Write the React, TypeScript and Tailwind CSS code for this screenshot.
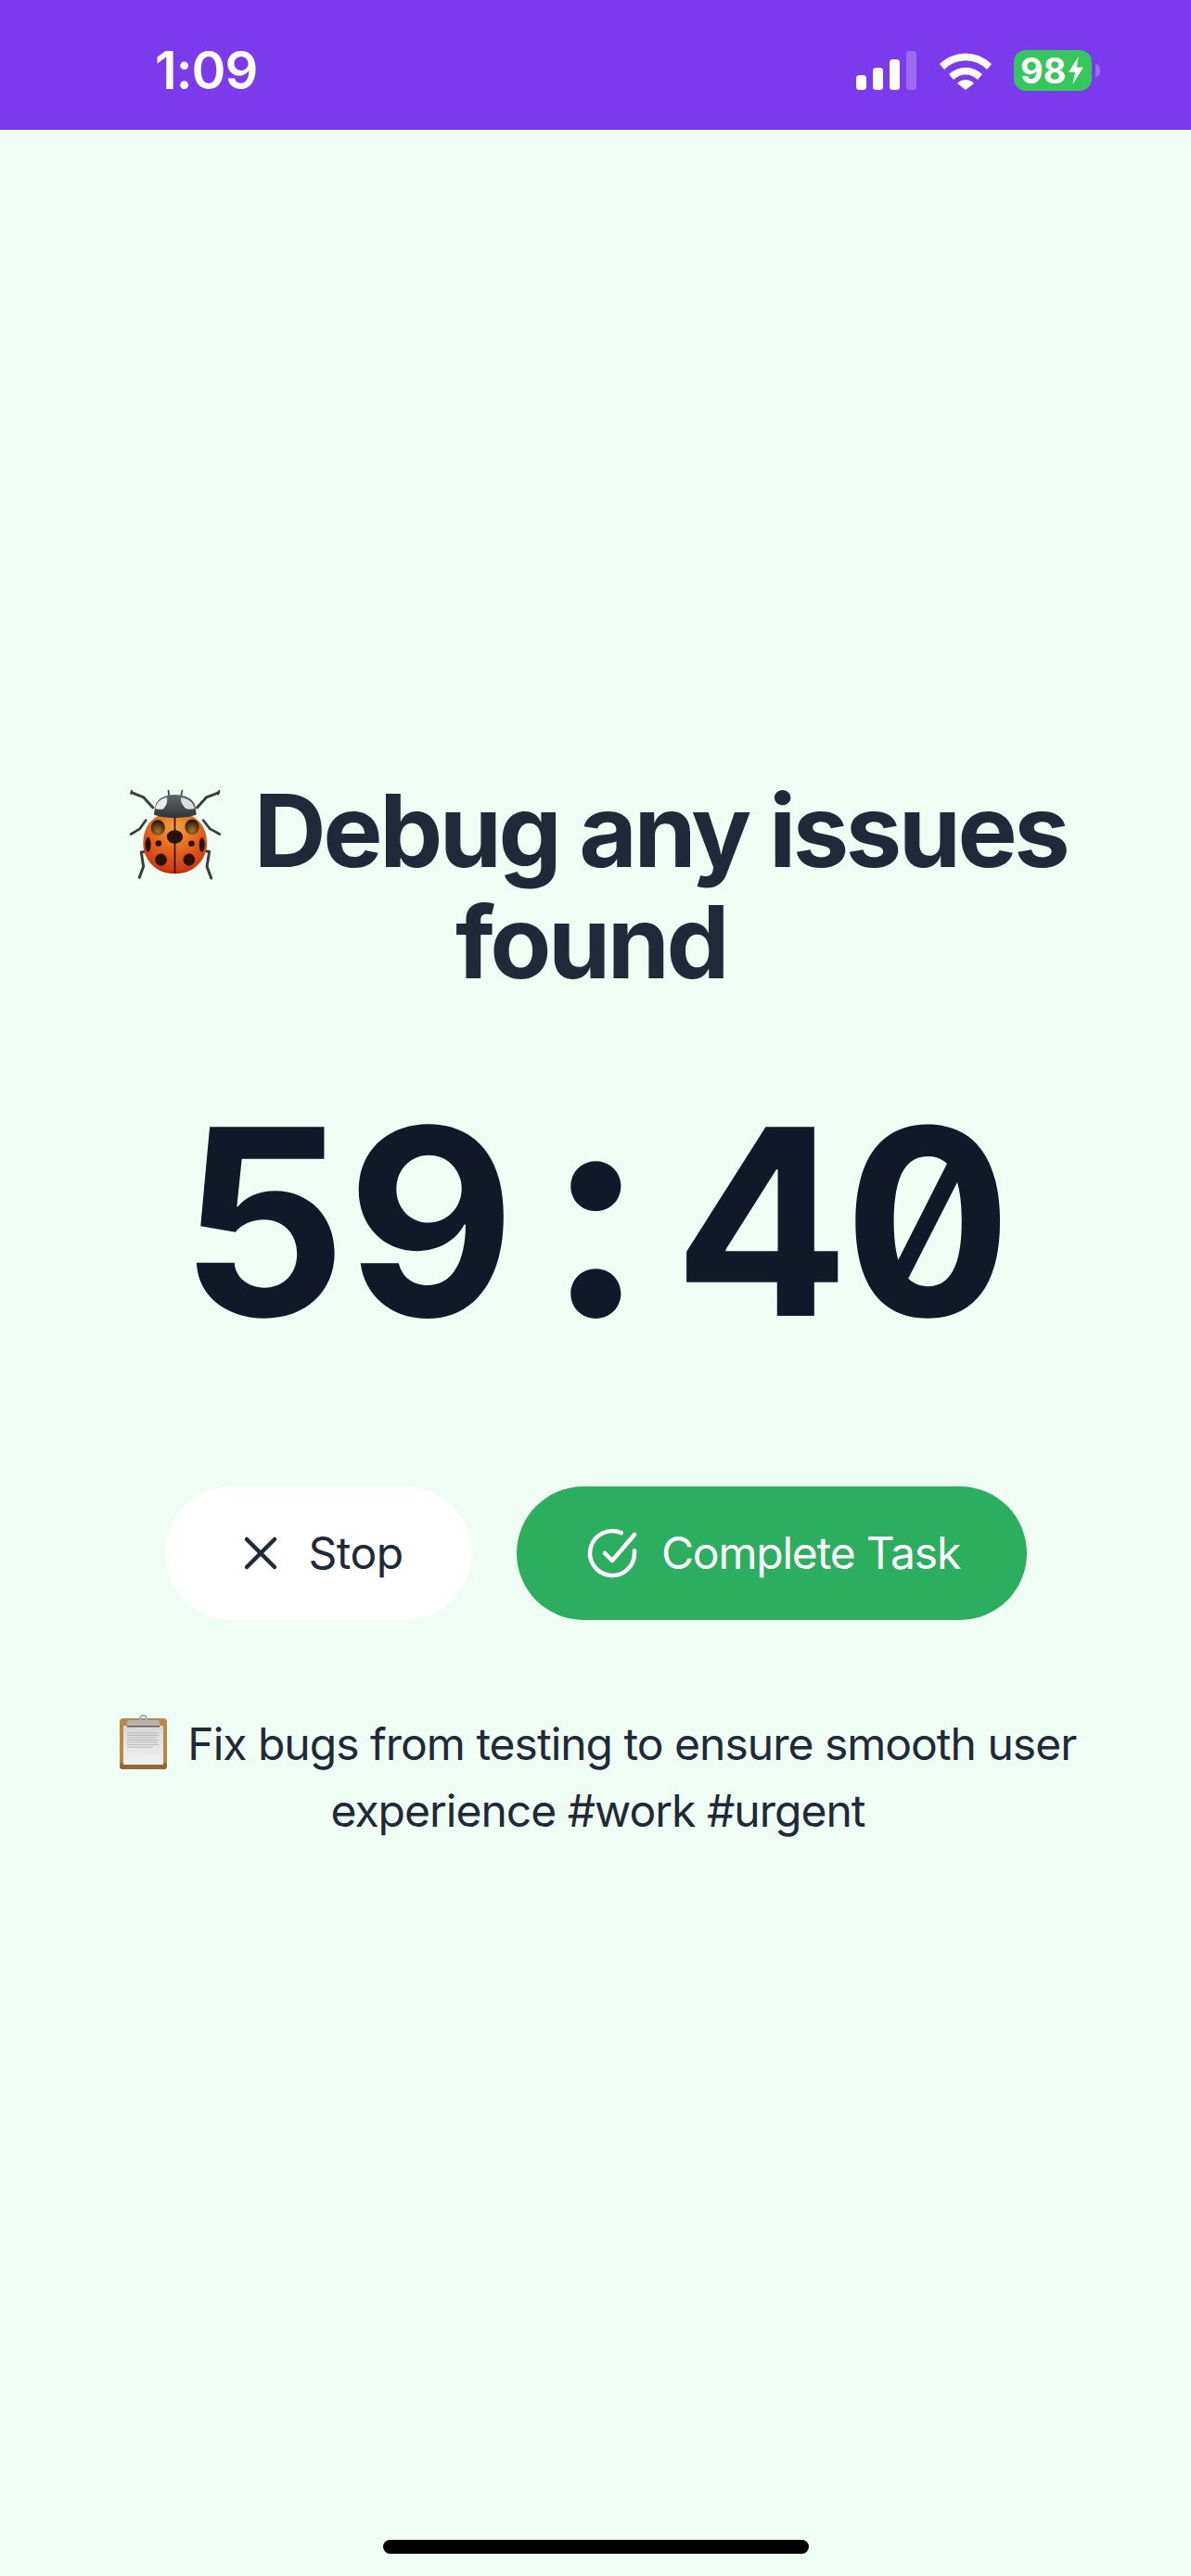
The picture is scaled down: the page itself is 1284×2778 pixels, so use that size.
import { X } from 'lucide-react';

const Ladybug = () => (
  <svg viewBox="60 85 295 295" className="inline-block w-[98px] h-[98px] align-[-14px] ml-[16px] mr-[14px]">
    <defs>
      <radialGradient id="shell" cx="0.5" cy="0.25" r="0.85">
        <stop offset="0" stopColor="#f2a33c" />
        <stop offset="0.4" stopColor="#e86a1c" />
        <stop offset="0.82" stopColor="#cf3a10" />
        <stop offset="1" stopColor="#611505" />
      </radialGradient>
      <linearGradient id="head" x1="0" y1="0" x2="0" y2="1">
        <stop offset="0" stopColor="#5f6669" />
        <stop offset="1" stopColor="#303334" />
      </linearGradient>
      <radialGradient id="spot" cx="0.5" cy="0.75" r="0.7">
        <stop offset="0" stopColor="#a07a30" />
        <stop offset="1" stopColor="#2a1208" />
      </radialGradient>
    </defs>
    <g fill="none" stroke="#3b3e3f" strokeLinecap="round" strokeLinejoin="round">
      <path d="M135 145 L105 112 L80 102 L66 96" strokeWidth="9" />
      <path d="M66 90 L64 100" strokeWidth="6" />
      <path d="M278 145 L308 112 L334 102 L348 96" strokeWidth="9" />
      <path d="M350 90 L346 102" strokeWidth="6" />
      <path d="M112 186 L92 214 L64 231" strokeWidth="8" />
      <path d="M298 186 L320 214 L351 231" strokeWidth="8" />
      <path d="M110 288 L97 290 L104 336 L91 372" strokeWidth="9" />
      <path d="M305 286 L318 288 L310 336 L324 374" strokeWidth="9" />
      <path d="M187 106 L185 90 M226 106 L230 90" strokeWidth="5" />
    </g>
    <path d="M206 360 C140 360 103 310 103 262 C103 205 135 160 206 160 C277 160 310 205 310 262 C310 310 272 360 206 360 Z" fill="url(#shell)" />
    <path d="M138 168 L142 140 C150 112 180 103 206 103 C235 103 266 114 272 140 L276 168 C240 182 170 182 138 168 Z" fill="url(#head)" />
    <path d="M142 148 C146 128 160 116 180 112 C184 124 178 140 168 150 C158 152 150 150 142 148 Z" fill="#e9ebeb" />
    <path d="M270 148 C266 128 250 116 226 112 C224 124 230 138 242 148 C252 152 262 150 270 148 Z" fill="#dcdfdf" />
    <path d="M206 178 V358" stroke="#2a0d03" strokeWidth="5" />
    <g fill="#2a1208">
      <ellipse cx="151" cy="210" rx="23" ry="25" fill="url(#spot)" />
      <ellipse cx="262" cy="208" rx="23" ry="25" fill="url(#spot)" />
      <ellipse cx="206" cy="240" rx="26" ry="22" />
      <ellipse cx="119" cy="265" rx="9" ry="24" />
      <ellipse cx="294" cy="266" rx="9" ry="24" />
      <circle cx="153" cy="261" r="10" />
      <circle cx="260" cy="262" r="10" />
      <ellipse cx="161" cy="314" rx="19" ry="20" />
      <ellipse cx="252" cy="314" rx="19" ry="20" />
    </g>
  </svg>
);

const Clipboard = () => (
  <svg viewBox="0 0 52 60" className="inline-block w-[52px] h-[60px] align-[-11px] mr-[9px]">
    <defs>
      <linearGradient id="paper" x1="0" y1="0" x2="0" y2="1">
        <stop offset="0" stopColor="#d6d6d6" />
        <stop offset="1" stopColor="#f2f2f2" />
      </linearGradient>
    </defs>
    <rect x="0" y="4" width="51" height="55" rx="4" fill="#b98a46" />
    <rect x="0" y="52" width="51" height="7" rx="3" fill="#8f6a34" />
    <rect x="4" y="12" width="43" height="42" fill="url(#paper)" />
    <path d="M8 20H42M8 22.500H42M8 25H40M8 27.500H42M8 30H41M8 32.500H42M8 35H36" stroke="#b0b0b0" strokeWidth="0.800" />
    <circle cx="25.500" cy="4.500" r="3.500" fill="none" stroke="#9fb0c4" strokeWidth="2" />
    <rect x="8" y="6" width="35" height="7" rx="2" fill="#b4b4b4" />
    <rect x="8" y="12" width="35" height="1.500" fill="#6a5a48" />
  </svg>
);

const StatusBar = () => (
  <div className="h-[140px] bg-[#7c3aed] flex items-center justify-between pt-[11px] pl-[167px] pr-[98px] text-white">
    <span className="text-[56px] font-semibold leading-none tracking-[-1px]">1:09</span>
    <div className="flex items-center">
      <svg viewBox="0 0 66 42" className="w-[66px] h-[42px]">
        <rect x="0" y="26" width="11" height="16" rx="3.500" fill="white" />
        <rect x="18" y="18" width="11" height="24" rx="3.500" fill="white" />
        <rect x="36" y="9" width="11" height="33" rx="3.500" fill="white" />
        <rect x="54" y="0" width="11" height="42" rx="3.500" fill="white" fillOpacity="0.25" />
      </svg>
      <svg viewBox="0 0 58 42" className="w-[58px] h-[42px] ml-[23px]">
        <path d="M1 14 A40 40 0 0 1 57 14 L52 20 A32 32 0 0 0 6 20 Z" fill="white" />
        <path d="M11 25 A26 26 0 0 1 47 25 L42 31 A18 18 0 0 0 16 31 Z" fill="white" />
        <path d="M20 35 A12 12 0 0 1 38 35 L29 42 Z" fill="white" />
      </svg>
      <div className="ml-[23px] w-[84px] h-[44px] rounded-[13px] bg-[#34c759] flex items-center pl-[7px] text-[38px] font-bold leading-none">
        <span>98</span>
        <svg viewBox="0 0 20 34" className="w-[20px] h-[30px] ml-[1px]">
          <path d="M13 0 L1 19 H9 L6 34 L19 13 H11 Z" fill="white" />
        </svg>
      </div>
      <div className="ml-[4px] w-[5px] h-[14px] rounded-r-[5px] bg-white/25" />
    </div>
  </div>
);

export default function App() {
  return (
    <div className="relative min-h-[2778px] bg-[#f0fdf4] flex flex-col font-['Inter',sans-serif]">
      <StatusBar />
      <main className="flex flex-col items-center px-[60px] pt-[696px]">
        <h1 className="pr-[10px] text-[108px] leading-[120px] font-bold text-[#1f2937] text-center tracking-[-3.500px]">
          <Ladybug /> Debug any issues found
        </h1>
        <div className="mt-[83px] flex items-baseline text-[280px] leading-[288px] font-bold text-[#111827] tabular-nums slashed-zero">
          <span className="w-[178.500px] text-center">5</span>
          <span className="w-[178.500px] text-center">9</span>
          <span className="w-[178.500px] text-center text-[320px] leading-[288px]">:</span>
          <span className="w-[178.500px] text-center">4</span>
          <span className="w-[178.500px] text-center">0</span>
        </div>
        <div className="mt-[141px] flex gap-[48px]">
          <button className="h-[144px] w-[331px] rounded-full bg-white flex items-center justify-center gap-[21px] text-[48px] tracking-[-0.500px] text-[#1f2937]">
            <X size={60} strokeWidth={1.8} />
            Stop
          </button>
          <button className="h-[144px] w-[550px] rounded-full bg-[#2bae5e] flex items-center justify-center gap-[21px] text-[48px] tracking-[-1.200px] text-white">
            <svg viewBox="0 0 24 24" className="w-[64px] h-[64px]" fill="none" stroke="white" strokeWidth="1.700" strokeLinecap="round" strokeLinejoin="round">
              <path d="M21 11v1a9 9 0 1 1-5.300-8.200" />
              <path d="M21 4.500 12 15l-3-3" />
            </svg>
            Complete Task
          </button>
        </div>
        <p className="mt-[98px] pl-[5px] text-[48px] leading-[72px] tracking-[-1px] text-[#1f2937] text-center w-[1100px]">
          <Clipboard /> Fix bugs from testing to ensure smooth user experience #work #urgent
        </p>
      </main>
      <div className="absolute bottom-[24px] left-[413px] w-[459px] h-[15px] rounded-full bg-black" />
    </div>
  );
}
